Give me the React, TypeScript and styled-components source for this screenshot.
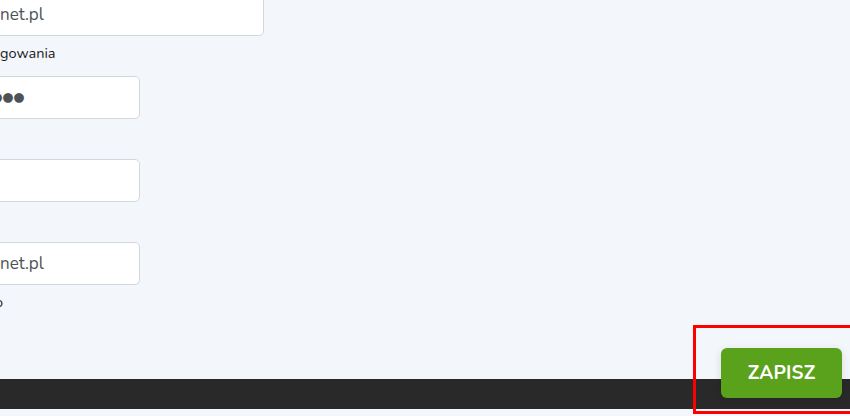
import styled, { createGlobalStyle } from "styled-components";
import React from "react";

const GlobalStyle = createGlobalStyle`
  html, body {
    margin: 0;
    padding: 0;
    background-color: #f3f6fa;
    font-family: "Nunito", "Lato", "Noto Sans", sans-serif;
    overflow: hidden;
  }
`;

const Page = styled.div`
  position: relative;
  height: 416px;
  overflow: hidden;
`;

const Form = styled.div`
  display: flex;
  flex-direction: column;
  margin-top: -7px;
  margin-left: -12px;
`;

const Field = styled.div`
  display: flex;
  flex-direction: column;
`;

const Input = styled.div<{ $wide?: boolean }>`
  box-sizing: border-box;
  width: ${(p) => (p.$wide ? "276px" : "152px")};
  height: 43px;
  padding-left: 11px;
  display: flex;
  align-items: center;
  background-color: #ffffff;
  border: 1px solid #d3d8de;
  border-radius: 5px;
  color: #4d5256;
  font-size: 17px;
  white-space: nowrap;
  overflow: hidden;
`;

const Dots = styled.span`
  font-size: 20px;
  letter-spacing: -1px;
  color: #4d5256;
  margin-left: -9px;
`;

const Help = styled.div<{ $shift?: number }>`
  height: 40px;
  box-sizing: border-box;
  padding-top: 8px;
  padding-left: ${(p) => p.$shift ?? 12}px;
  font-size: 14.5px;
  line-height: 18px;
  color: #1b1b1b;
`;

const Footer = styled.div`
  position: absolute;
  left: 0;
  right: 0;
  top: 379px;
  height: 30px;
  background-color: #292929;
`;

const SaveButton = styled.button`
  position: absolute;
  top: 348px;
  right: 8px;
  width: 121px;
  height: 50px;
  border: none;
  border-radius: 6px;
  background-color: #5ba21c;
  color: #ffffff;
  font-family: "Nunito", "Lato", "Noto Sans", sans-serif;
  font-weight: 700;
  font-size: 19px;
  letter-spacing: 0.2px;
  box-shadow: 0 2px 8px rgba(0, 0, 0, 0.12);
  cursor: pointer;
`;

const Highlight = styled.div`
  position: absolute;
  left: 693px;
  top: 325px;
  width: 160px;
  height: 89px;
  box-sizing: border-box;
  border: 3px solid #ff0000;
  pointer-events: none;
`;

const App = () => {
  return (
    <Page>
      <GlobalStyle />
      <Form>
        <Field>
          <Input $wide>net.pl</Input>
          <Help>gowania</Help>
        </Field>
        <Field>
          <Input>
            <Dots>●●●</Dots>
          </Input>
          <Help />
        </Field>
        <Field>
          <Input />
          <Help />
        </Field>
        <Field>
          <Input>net.pl</Input>
          <Help $shift={7}>o</Help>
        </Field>
      </Form>
      <Footer />
      <SaveButton>ZAPISZ</SaveButton>
      <Highlight />
    </Page>
  );
};

export default App;
